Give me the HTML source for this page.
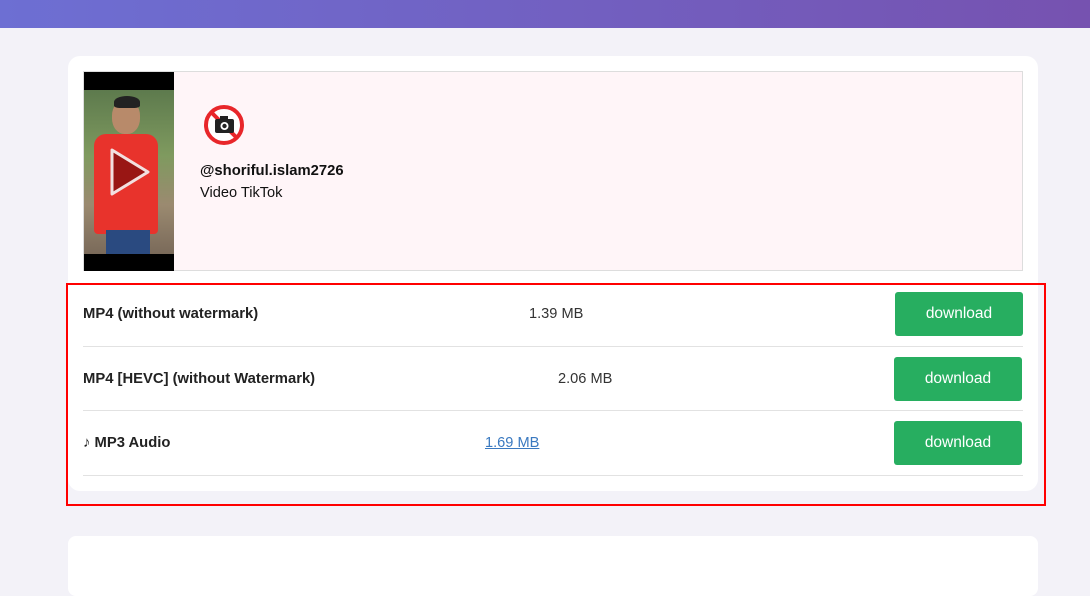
<!DOCTYPE html>
<html><head><meta charset="utf-8"><style>
body{margin:0;width:1090px;height:581px;overflow:hidden;background:#f3f2f8;font-family:"Liberation Sans",Arial,sans-serif;position:relative}
.hdr{position:absolute;left:0;top:0;width:1090px;height:28px;background:linear-gradient(90deg,#6d6fd3,#7652b0)}
.card{position:absolute;left:68px;top:56px;width:970px;height:435px;background:#fff;border-radius:12px}
.card2{position:absolute;left:68px;top:536px;width:970px;height:60px;background:#fff;border-radius:8px}
.info{position:absolute;left:83px;top:71px;width:938px;height:198px;background:#fff5f8;border:1px solid #ddd}
.thumb{position:absolute;left:84px;top:72px;width:90px;height:199px;background:#000}
.photo{position:absolute;left:84px;top:90px;width:90px;height:164px;background:linear-gradient(180deg,#5d7a4d 0%,#7f9a5f 40%,#9b8a70 70%,#7a6a5a 100%);overflow:hidden}
.line{position:absolute;left:83px;width:940px;height:1px;background:#e2e2e2}
.lbl{position:absolute;left:83px;font-size:14.8px;font-weight:bold;color:#222}
.sz{position:absolute;font-size:14.6px;color:#333}
.btn{position:absolute;width:128px;height:44px;background:#27ae60;color:#fff;font-size:15.5px;border-radius:3px;text-align:center;line-height:44px}
.red{position:absolute;left:66px;top:283px;width:976px;height:219px;border:2px solid #f00}
</style></head><body>
<div class="hdr"></div>
<div class="card"></div>
<div class="card2"></div>
<div class="info"></div>
<div class="thumb"></div>
<div class="photo">
<div style="position:absolute;left:28px;top:10px;width:28px;height:34px;border-radius:45%;background:#b88a6a"></div>
<div style="position:absolute;left:30px;top:6px;width:26px;height:12px;border-radius:50% 50% 20% 20%;background:#222"></div>
<div style="position:absolute;left:10px;top:44px;width:64px;height:100px;background:#e8332c;border-radius:12px 12px 4px 4px"></div>
<div style="position:absolute;left:22px;top:140px;width:44px;height:30px;background:#2a4a80"></div>
<svg style="position:absolute;left:24px;top:56px" width="44" height="52"><path d="M4 4 L40 26 L4 48 Z" fill="rgba(120,10,10,.7)" stroke="#f2e0e0" stroke-width="3" stroke-linejoin="round"/></svg>
</div>
<svg style="position:absolute;left:203px;top:104px" width="42" height="42" viewBox="0 0 42 42">
<circle cx="21" cy="21" r="18" fill="#fff" stroke="#e8262a" stroke-width="4"/>
<path d="M9 9 L33 33" stroke="#e8262a" stroke-width="4"/>
<rect x="12" y="15" width="19" height="14" rx="2" fill="#222"/><rect x="17" y="12" width="8" height="4" fill="#222"/>
<circle cx="21.5" cy="22" r="4" fill="#fff"/><circle cx="21.5" cy="22" r="2.2" fill="#222"/>
</svg>
<div style="position:absolute;left:200px;top:163px;font-size:14.8px;font-weight:bold;color:#111">@shoriful.islam2726</div>
<div style="position:absolute;left:200px;top:185px;font-size:14.6px;color:#111">Video TikTok</div>

<div class="lbl" style="top:306px">MP4 (without watermark)</div>
<div class="sz" style="left:529px;top:306px">1.39 MB</div>
<div class="btn" style="left:895px;top:292px">download</div>
<div class="line" style="top:346px"></div>
<div class="lbl" style="top:371px">MP4 [HEVC] (without Watermark)</div>
<div class="sz" style="left:558px;top:371px">2.06 MB</div>
<div class="btn" style="left:894px;top:357px">download</div>
<div class="line" style="top:410px"></div>
<div class="lbl" style="top:435px">♪ MP3 Audio</div>
<div class="sz" style="left:485px;top:435px;color:#3a79c0;text-decoration:underline">1.69 MB</div>
<div class="btn" style="left:894px;top:421px">download</div>
<div class="line" style="top:475px"></div>
<div class="red"></div>
</body></html>
